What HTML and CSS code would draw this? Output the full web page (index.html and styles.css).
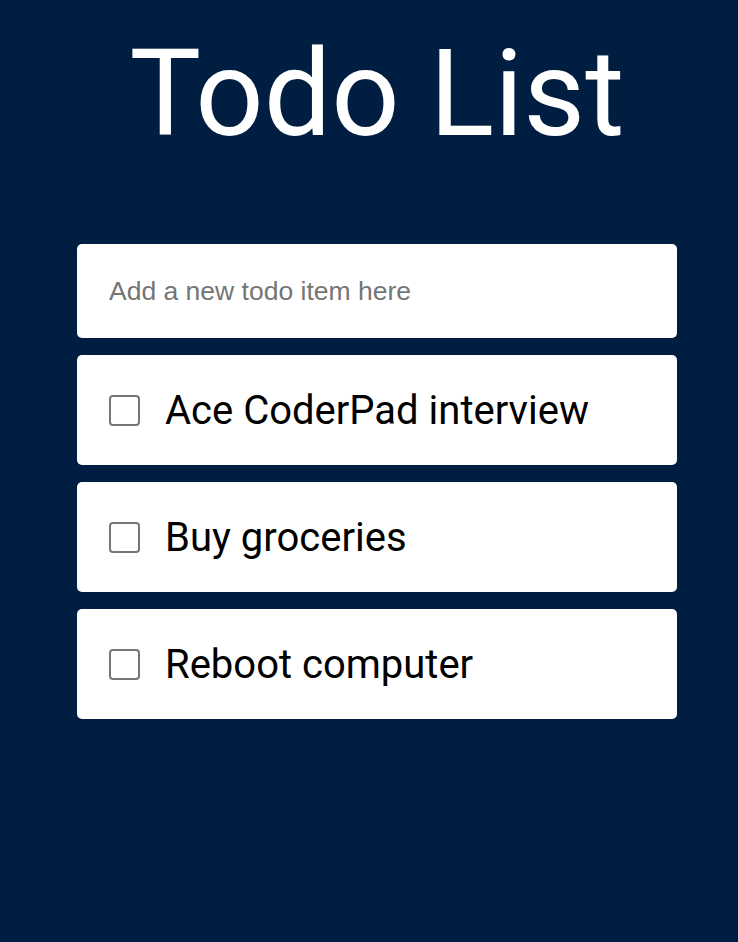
FILE: index.html
```html
<!DOCTYPE html>
<html>
<head>
<meta charset="utf-8">
<link rel="stylesheet" href="styles.css">
</head>
<body>
<main class="app">
  <h1 class="title">Todo List</h1>
  <div class="list">
    <input class="new-todo" type="text" placeholder="Add a new todo item here">
    <label class="item"><span class="box"></span><span class="text">Ace CoderPad interview</span></label>
    <label class="item"><span class="box"></span><span class="text">Buy groceries</span></label>
    <label class="item"><span class="box"></span><span class="text">Reboot computer</span></label>
  </div>
</main>
</body>
</html>
```
FILE: styles.css
```css
html, body {
  margin: 0;
  padding: 0;
  background: #001e42;
  height: 100%;
}
.app {
  width: 600px;
  margin-left: 77px;
  padding-top: 24px;
  font-family: Roboto, sans-serif;
}
.title {
  margin: 0;
  text-align: center;
  color: #fff;
  font-weight: 400;
  font-size: 120px;
  line-height: 140px;
}
.list {
  margin-top: 80px;
  display: flex;
  flex-direction: column;
  gap: 17px;
}
.new-todo {
  box-sizing: border-box;
  height: 94px;
  width: 100%;
  border: none;
  border-radius: 5px;
  padding: 0 32px;
  font-family: "Liberation Sans", Arial, sans-serif;
  font-size: 26.5px;
  background: #fff;
  outline: none;
}
.new-todo::placeholder {
  color: #757575;
}
.item {
  box-sizing: border-box;
  height: 110px;
  background: #fff;
  border-radius: 5px;
  display: flex;
  align-items: center;
  padding-left: 32px;
  gap: 25px;
}
.box {
  box-sizing: border-box;
  width: 31px;
  height: 31px;
  border: 2px solid #767676;
  border-radius: 4px;
  flex: none;
}
.text {
  font-size: 40px;
  color: #000;
}
```
